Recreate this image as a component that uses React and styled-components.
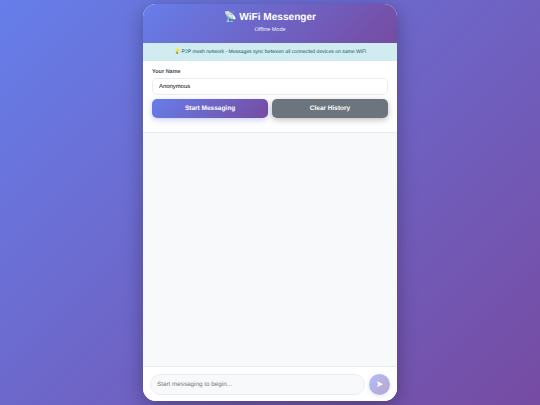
import styled, { createGlobalStyle } from "styled-components"

const Global = createGlobalStyle`
	html, body, #root {
		margin: 0;
		height: 100%;
	}
	body {
		font-family: "Liberation Sans", Arial, sans-serif;
		background: linear-gradient(135deg, #667eea 0%, #764ba2 100%);
		overflow: hidden;
		text-rendering: geometricPrecision;
	}
	* {
		box-sizing: border-box;
	}
`

const Page = styled.div`
	height: 405px;
	display: flex;
	justify-content: center;
	padding: 4px 0;
`

const Card = styled.div`
	width: 254px;
	height: 397px;
	background: #fff;
	border-radius: 13px;
	box-shadow: 0 5px 20px rgba(0, 0, 0, 0.3);
	display: flex;
	flex-direction: column;
	overflow: hidden;
`

const Header = styled.header`
	height: 39px;
	padding-top: 7px;
	background: linear-gradient(135deg, #667eea 0%, #764ba2 100%);
	color: #fff;
	text-align: center;
`

const Title = styled.h1`
	margin: 0;
	font-size: 10.1px;
	line-height: 14px;
	font-weight: 700;
`

const Subtitle = styled.div`
	margin-top: 2px;
	font-size: 5.5px;
	line-height: 7px;
	opacity: 0.9;
`

const Banner = styled.div`
	height: 18px;
	background: #d1ecf1;
	color: #0c5460;
	font-size: 5.07px;
	display: flex;
	align-items: center;
	justify-content: center;
`

const Form = styled.div`
	height: 72px;
	padding: 8px 9px 0;
	border-bottom: 1px solid #e9ecef;
	flex-shrink: 0;
`

const Label = styled.label`
	display: block;
	font-size: 5.5px;
	line-height: 7px;
	font-weight: 700;
	color: #495057;
	margin-bottom: 2px;
`

const NameInput = styled.input`
	display: block;
	width: 100%;
	height: 17px;
	padding: 0 6px;
	border: 1px solid #e9ecef;
	border-radius: 5px;
	background: #fff;
	color: #000;
	font: 5.9px "Liberation Sans", Arial, sans-serif;
	text-rendering: geometricPrecision;
	outline: none;
`

const Buttons = styled.div`
	display: grid;
	grid-template-columns: 1fr 1fr;
	gap: 4px;
	margin-top: 4px;
`

const Button = styled.button`
	height: 19px;
	padding: 0;
	border: none;
	border-radius: 5px;
	color: #fff;
	font: 700 6.5px "Liberation Sans", Arial, sans-serif;
	text-rendering: geometricPrecision;
	background: ${(p) => (p.$primary ? "linear-gradient(135deg, #667eea 0%, #764ba2 100%)" : "#6c757d")};
	box-shadow: 0 2px 6px ${(p) => (p.$primary ? "rgba(102, 126, 234, 0.35)" : "rgba(0, 0, 0, 0.25)")};
`

const Messages = styled.div`
	flex: 1;
	background: #f8f9fa;
`

const Composer = styled.div`
	height: 35px;
	border-top: 1px solid #e9ecef;
	background: #fff;
	display: flex;
	align-items: center;
	gap: 4px;
	padding: 0 7px;
	flex-shrink: 0;
`

const MessageInput = styled.input`
	flex: 1;
	min-width: 0;
	height: 21px;
	padding: 0 6px;
	border: 1px solid #e9ecef;
	border-radius: 11px;
	background: #f8f9fa;
	font: 6.3px "Liberation Sans", Arial, sans-serif;
	text-rendering: geometricPrecision;
	outline: none;

	&::placeholder {
		color: #757575;
	}
`

const Send = styled.button`
	width: 21px;
	height: 21px;
	padding: 0;
	border: none;
	border-radius: 50%;
	color: #fff;
	font: 9px "DejaVu Sans", sans-serif;
	background: linear-gradient(135deg, #667eea 0%, #764ba2 100%);
	opacity: 0.5;
	box-shadow: 0 1px 4px rgba(102, 126, 234, 0.4);
`

const App = () => {
	return (
		<Page>
			<Global />
			<Card>
				<Header>
					<Title>📡 WiFi Messenger</Title>
					<Subtitle>Offline Mode</Subtitle>
				</Header>
				<Banner>💡 P2P mesh network - Messages sync between all connected devices on same WiFi</Banner>
				<Form>
					<Label>Your Name</Label>
					<NameInput defaultValue="Anonymous" />
					<Buttons>
						<Button $primary>Start Messaging</Button>
						<Button>Clear History</Button>
					</Buttons>
				</Form>
				<Messages />
				<Composer>
					<MessageInput placeholder="Start messaging to begin..." disabled />
					<Send disabled>➤</Send>
				</Composer>
			</Card>
		</Page>
	)
}

export default App
